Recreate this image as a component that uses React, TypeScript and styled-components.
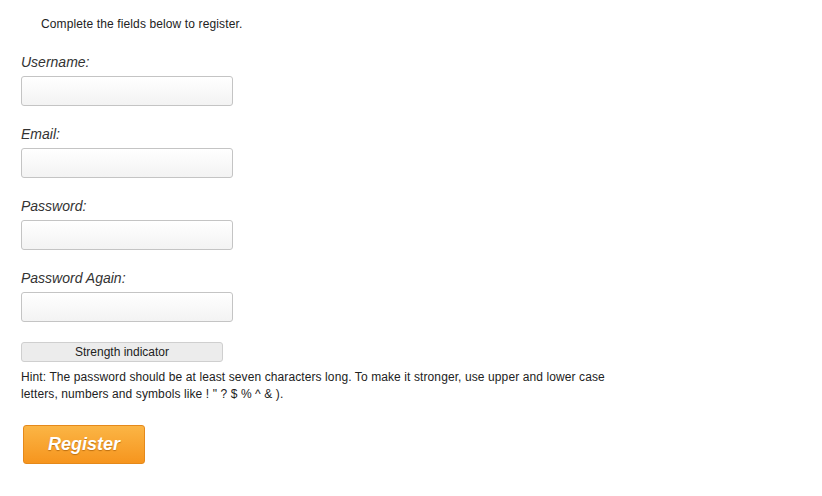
import React from "react";
import styled, { createGlobalStyle } from "styled-components";

const Global = createGlobalStyle`
  html, body { margin: 0; padding: 0; background: #fff; }
  body { font-family: "Liberation Sans", Arial, sans-serif; color: #222; }
`;

const Page = styled.div`
  display: flex;
  flex-direction: column;
  align-items: flex-start;
  padding: 16px 0 0 21px;
`;

const Intro = styled.p`
  margin: 0 0 0 20px;
  font-size: 12px;
  line-height: 17px;
  letter-spacing: 0.12px;
  color: #222;
`;

const Field = styled.div`
  display: flex;
  flex-direction: column;
  margin-top: ${(p: { $first?: boolean }) => (p.$first ? "20px" : "19px")};
`;

const Label = styled.label`
  font-size: 14px;
  font-style: italic;
  line-height: 18px;
  color: #333;
  margin-bottom: 5px;
`;

const Input = styled.input`
  box-sizing: border-box;
  width: 212px;
  height: 30px;
  border: 1px solid #c4c4c4;
  border-radius: 3px;
  background: linear-gradient(#ffffff, #f3f3f3);
  padding: 0 6px;
  font-family: inherit;
  font-size: 13px;
  outline: none;
`;

const Strength = styled.div`
  box-sizing: border-box;
  width: 202px;
  height: 20px;
  margin-top: 20px;
  border: 1px solid #cfcfcf;
  border-radius: 3px;
  background: #ececec;
  display: flex;
  align-items: center;
  justify-content: center;
  font-size: 12px;
  color: #222;
`;

const Hint = styled.p`
  margin: 7px 0 0 0;
  max-width: 615px;
  font-size: 12px;
  line-height: 17px;
  letter-spacing: 0.1px;
  color: #222;
`;

const RegisterButton = styled.button`
  box-sizing: border-box;
  margin: 22px 0 0 2px;
  width: 122px;
  height: 39px;
  border: 1px solid #e5891a;
  border-radius: 3px;
  background: linear-gradient(#fbb545, #f6951e);
  color: #fff;
  font-family: "Liberation Sans", Arial, sans-serif;
  font-size: 18px;
  font-weight: bold;
  font-style: italic;
  text-shadow: 0 1px 1px rgba(150, 80, 0, 0.6);
  cursor: pointer;
  padding: 0;
`;

const fields = ["Username:", "Email:", "Password:", "Password Again:"];

export default function App() {
  return (
    <>
      <Global />
      <Page>
        <Intro>Complete the fields below to register.</Intro>
        {fields.map((f, i) => (
          <Field key={f} $first={i === 0}>
            <Label>{f}</Label>
            <Input type={f.startsWith("Password") ? "password" : "text"} />
          </Field>
        ))}
        <Strength>Strength indicator</Strength>
        <Hint>
          Hint: The password should be at least seven characters long. To make it stronger, use upper and lower case
          letters, numbers and symbols like ! " ? $ % ^ &amp; ).
        </Hint>
        <RegisterButton>Register</RegisterButton>
      </Page>
    </>
  );
}
